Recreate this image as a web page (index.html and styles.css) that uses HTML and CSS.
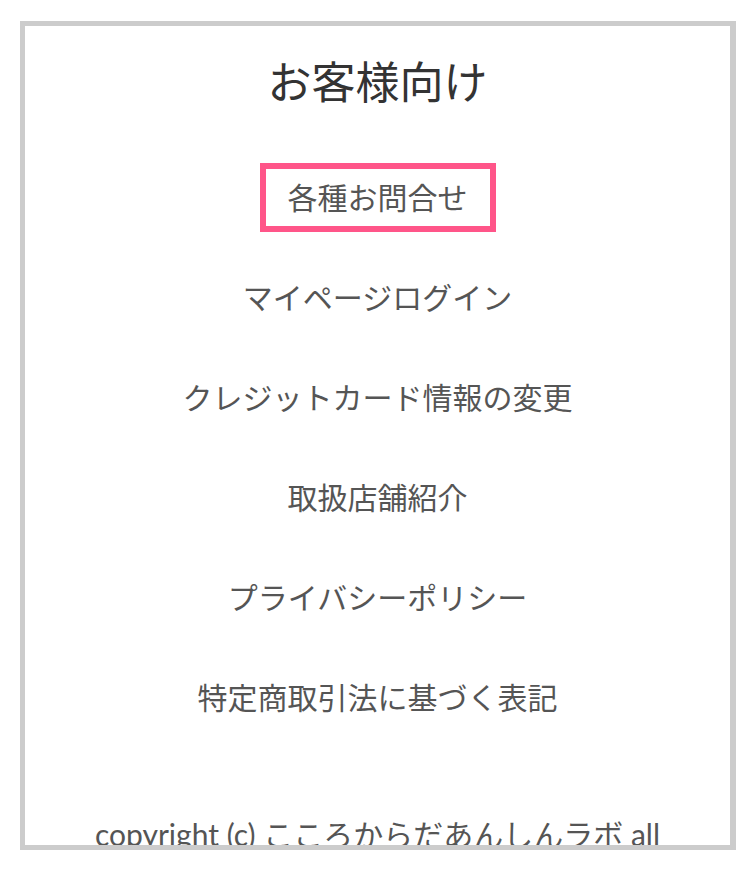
FILE: index.html
```html
<!DOCTYPE html>
<html lang="ja">
<head>
<meta charset="utf-8">
<title>お客様向け</title>
<link rel="stylesheet" href="styles.css">
</head>
<body>
<div class="frame">
  <section class="panel">
    <h2 class="title">お客様向け</h2>
    <ul class="links">
      <li><a class="link link--focus" href="#">各種お問合せ</a></li>
      <li><a class="link" href="#">マイページログイン</a></li>
      <li><a class="link" href="#">クレジットカード情報の変更</a></li>
      <li><a class="link" href="#">取扱店舗紹介</a></li>
      <li><a class="link" href="#">プライバシーポリシー</a></li>
      <li><a class="link" href="#">特定商取引法に基づく表記</a></li>
    </ul>
    <p class="copyright">copyright (c) こころからだあんしんラボ all rights reserved.</p>
  </section>
</div>
</body>
</html>
```

FILE: styles.css
```css
html, body {
  margin: 0;
  padding: 0;
  background: #ffffff;
}

body {
  font-family: Lato, "Noto Sans CJK JP", sans-serif;
}

.frame {
  margin: 21px 0 0 20px;
  width: 705px;
  height: 819px;
  border: 5px solid #cccccc;
  border-right-width: 6px;
  overflow: hidden;
  background: #ffffff;
}

.panel {
  display: flex;
  flex-direction: column;
  align-items: center;
  padding-top: 23px;
}

.title {
  margin: 0;
  font-size: 44px;
  line-height: 66px;
  font-weight: 400;
  color: #333333;
}

.links {
  list-style: none;
  margin: 32px 0 0;
  padding: 0;
  display: flex;
  flex-direction: column;
  align-items: center;
}

.links li {
  height: 100px;
  display: flex;
  align-items: center;
  justify-content: center;
}

.link {
  display: block;
  font-size: 30px;
  line-height: 45px;
  color: #555555;
  text-decoration: none;
  padding: 6px 22px;
  border: 6px solid transparent;
}

.link--focus {
  border-color: #ff5589;
}

.copyright {
  margin: 66px 0 0;
  padding: 0 42px;
  font-size: 30px;
  line-height: 42px;
  color: #555555;
  text-align: center;
}
```
